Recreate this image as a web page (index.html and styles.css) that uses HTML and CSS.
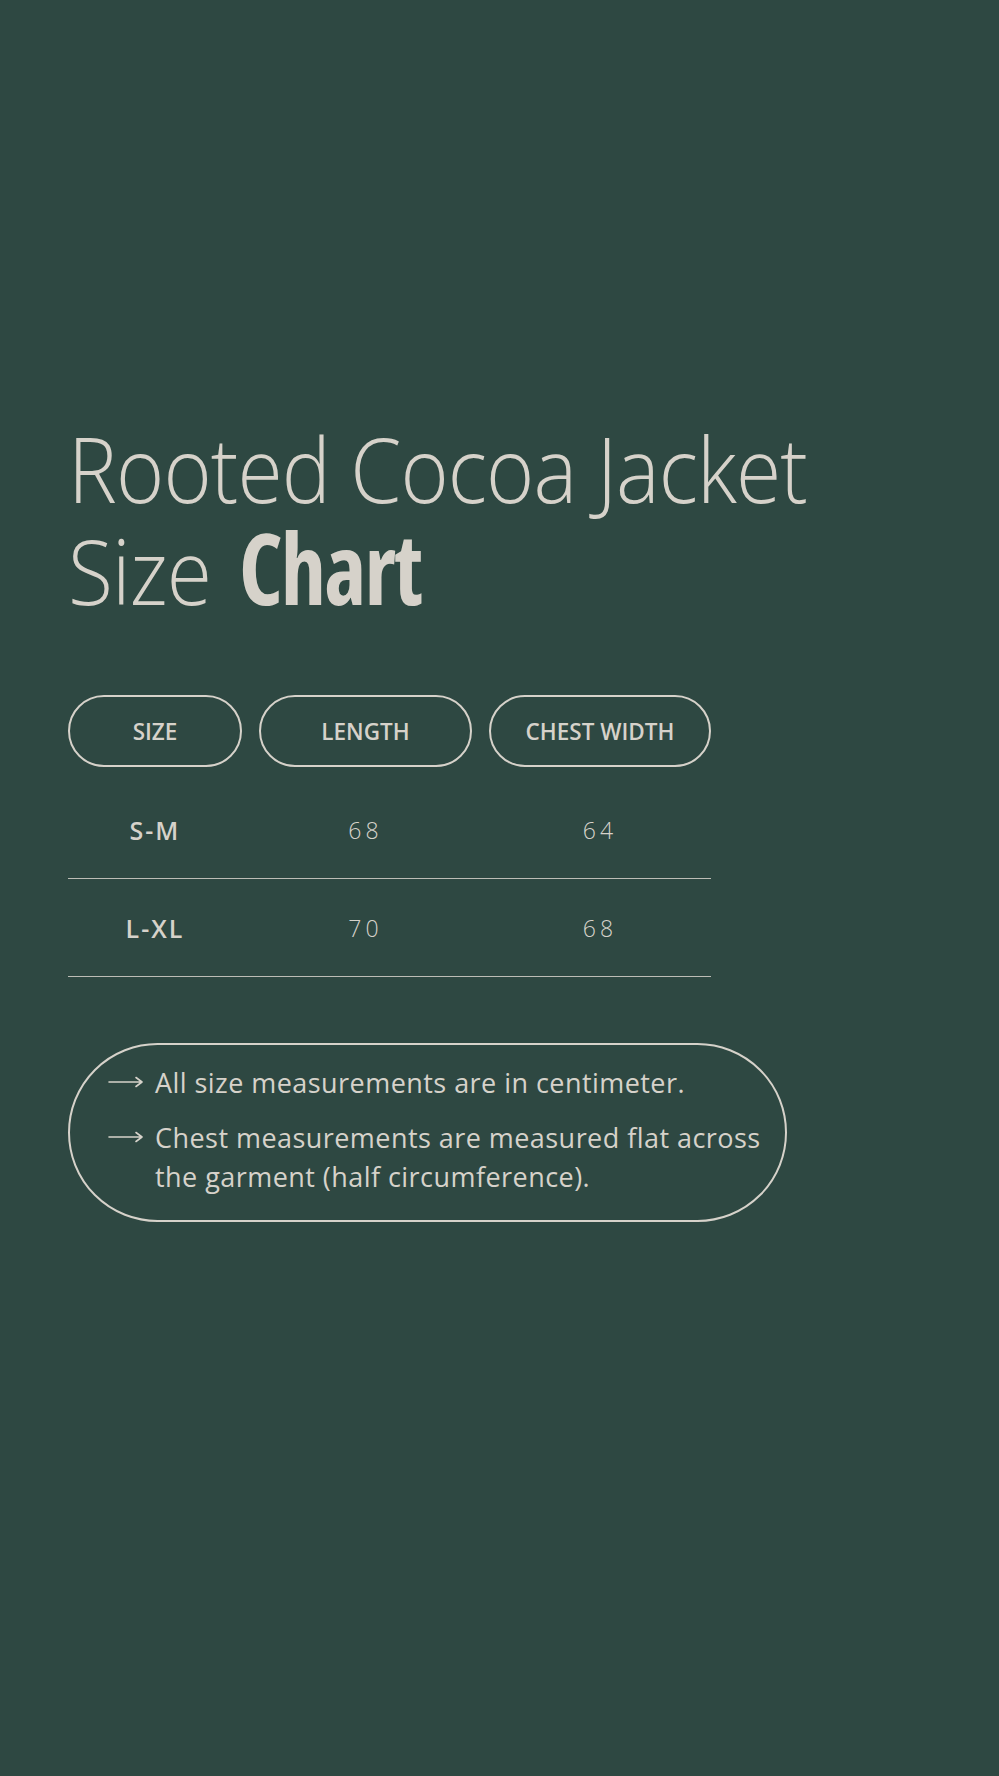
FILE: index.html
```html
<!DOCTYPE html>
<html lang="en">
<head>
<meta charset="utf-8">
<title>Rooted Cocoa Jacket Size Chart</title>
<link rel="stylesheet" href="styles.css">
</head>
<body>
<main class="page">
  <h1 class="title">Rooted Cocoa Jacket<br>Size <span class="title-bold">Chart</span></h1>

  <section class="chart">
    <div class="chart-head">
      <div class="pill">SIZE</div>
      <div class="pill">LENGTH</div>
      <div class="pill">CHEST WIDTH</div>
    </div>
    <div class="chart-row">
      <div class="cell cell-size">S-M</div>
      <div class="cell cell-num">68</div>
      <div class="cell cell-num">64</div>
    </div>
    <div class="chart-row">
      <div class="cell cell-size">L-XL</div>
      <div class="cell cell-num">70</div>
      <div class="cell cell-num">68</div>
    </div>
  </section>

  <ul class="notes">
    <li class="note">
      <svg class="arrow" viewBox="0 0 36 12" aria-hidden="true"><path d="M1 6H34M28 1.5L34 6L28 10.5" fill="none" stroke="currentColor" stroke-width="1.6" stroke-linecap="round" stroke-linejoin="round"/></svg>
      <span>All size measurements are in centimeter.</span>
    </li>
    <li class="note">
      <svg class="arrow" viewBox="0 0 36 12" aria-hidden="true"><path d="M1 6H34M28 1.5L34 6L28 10.5" fill="none" stroke="currentColor" stroke-width="1.6" stroke-linecap="round" stroke-linejoin="round"/></svg>
      <span>Chest measurements are measured flat across the garment (half circumference).</span>
    </li>
  </ul>
</main>
</body>
</html>
```

FILE: styles.css
```css
html, body {
  margin: 0;
  padding: 0;
}

body {
  background: #2e4842;
  color: #d6d2ca;
  font-family: "Open Sans", "DejaVu Sans", sans-serif;
  min-height: 1776px;
}

.page {
  padding: 417px 0 0 68px;
}

.title {
  margin: 0;
  font-family: "Open Sans", sans-serif;
  font-weight: 300;
  font-size: 90px;
  line-height: 102px;
  letter-spacing: -1px;
  transform: scaleX(0.915);
  transform-origin: left top;
}

.title-bold {
  margin-left: 8px;
  font-weight: 700;
  font-stretch: 75%;
  font-size: 99px;
  line-height: 0;
  letter-spacing: -2px;
}

.chart {
  margin-top: 74px;
  width: 643px;
}

.chart-head,
.chart-row {
  display: grid;
  grid-template-columns: 174px 213px 222px;
  column-gap: 17px;
}

.pill {
  height: 72px;
  box-sizing: border-box;
  border: 2px solid #d6d2ca;
  border-radius: 36px;
  display: flex;
  align-items: center;
  justify-content: center;
  font-family: "Open Sans", sans-serif;
  font-weight: 600;
  font-size: 22.5px;
}

.chart-row {
  height: 97px;
  align-items: center;
  border-bottom: 1px solid rgba(214, 210, 202, 0.85);
}

.chart-head + .chart-row {
  margin-top: 14px;
}

.cell {
  text-align: center;
  font-size: 23px;
}

.cell-size {
  font-size: 25px;
  font-weight: 600;
  letter-spacing: 2px;
}

.cell-num {
  font-weight: 300;
  letter-spacing: 4px;
}

.notes {
  list-style: none;
  margin: 66px 0 0;
  width: 719px;
  box-sizing: border-box;
  border: 2px solid #d6d2ca;
  border-radius: 90px;
  padding: 18px 12px 24px 38px;
  display: flex;
  flex-direction: column;
  gap: 16px;
}

.note {
  display: flex;
  align-items: flex-start;
  gap: 11px;
  font-size: 27px;
  font-weight: 400;
  line-height: 39px;
  letter-spacing: 0.45px;
}

.arrow {
  flex: none;
  width: 36px;
  height: 12px;
  margin-top: 13px;
}
```
